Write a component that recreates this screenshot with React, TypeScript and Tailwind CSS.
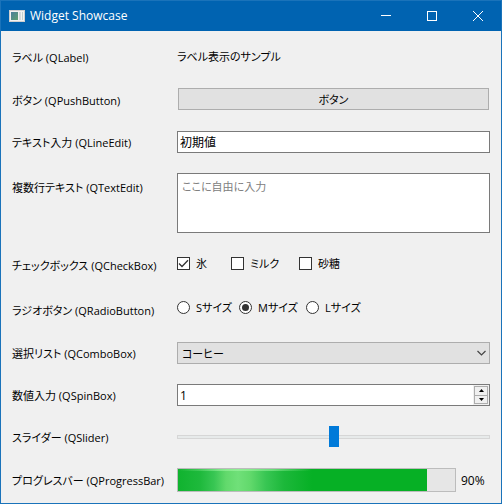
import { useState } from 'react';
import type { ReactNode } from 'react';

function AppIcon() {
  return (
    <svg width="16" height="14" viewBox="0 0 16 14" aria-hidden="true">
      <defs>
        <linearGradient id="pane" x1="0" y1="0" x2="1" y2="1">
          <stop offset="0" stopColor="#4a7f9c" />
          <stop offset="1" stopColor="#5fa070" />
        </linearGradient>
      </defs>
      <rect x="0.5" y="1.5" width="15" height="11" fill="#f2f2f2" stroke="#cfcfcf" />
      <rect x="2" y="3" width="7" height="8" fill="url(#pane)" />
      <rect x="10" y="3" width="2" height="8" fill="#d3dadc" />
      <rect x="13" y="3" width="1" height="8" fill="#c3cfcb" />
    </svg>
  );
}

function TitleBar() {
  return (
    <header className="flex h-[30px] items-center bg-[#0063b1] pl-2 text-white">
      <AppIcon />
      <h1 className="ml-[5px] flex-1 text-[12px] leading-4">Widget Showcase</h1>
      <button aria-label="Minimize" className="flex h-full w-[46px] items-center justify-center">
        <svg width="10" height="10" viewBox="0 0 10 10" stroke="white">
          <path d="M0 4.5H10" />
        </svg>
      </button>
      <button aria-label="Maximize" className="flex h-full w-[46px] items-center justify-center">
        <svg width="10" height="10" viewBox="0 0 10 10" stroke="white" fill="none">
          <rect x="0.5" y="0.5" width="9" height="9" />
        </svg>
      </button>
      <button aria-label="Close" className="flex h-full w-[46px] items-center justify-center">
        <svg width="10" height="10" viewBox="0 0 10 10" stroke="white">
          <path d="M0 0L10 10M10 0L0 10" />
        </svg>
      </button>
    </header>
  );
}

function RowLabel({ htmlFor, children, tall }: { htmlFor?: string; children: ReactNode; tall?: boolean }) {
  const place = tall ? 'self-start pt-[7px]' : 'self-center pt-0.5';
  return htmlFor ? (
    <label htmlFor={htmlFor} className={`whitespace-nowrap ${place}`}>
      {children}
    </label>
  ) : (
    <span className={`whitespace-nowrap ${place}`}>{children}</span>
  );
}

function Check({ label, defaultChecked }: { label: string; defaultChecked?: boolean }) {
  return (
    <label className="flex h-5 items-center gap-1.5 whitespace-nowrap">
      <span className="grid size-[13px] shrink-0">
        <input
          type="checkbox"
          defaultChecked={defaultChecked}
          className="peer col-start-1 row-start-1 size-[13px] appearance-none border border-[#333] bg-white"
        />
        <svg
          viewBox="0 0 13 13"
          className="pointer-events-none invisible col-start-1 row-start-1 size-[13px] peer-checked:visible"
          fill="none"
          stroke="#333"
          strokeWidth="1.3"
        >
          <path d="M2 6.5L5 9.5L11 3.2" />
        </svg>
      </span>
      <span className="pt-0.5">{label}</span>
    </label>
  );
}

function Radio({ label, defaultChecked }: { label: string; defaultChecked?: boolean }) {
  return (
    <label className="flex h-5 items-center gap-1.5 whitespace-nowrap">
      <span className="grid size-[13px] shrink-0 place-items-center">
        <input
          type="radio"
          name="size"
          defaultChecked={defaultChecked}
          className="peer col-start-1 row-start-1 size-[13px] appearance-none rounded-full border border-[#333] bg-white"
        />
        <span className="pointer-events-none invisible col-start-1 row-start-1 size-[7px] rounded-full bg-[#333] peer-checked:visible" />
      </span>
      <span className="pt-0.5">{label}</span>
    </label>
  );
}

function SpinBox() {
  const [value, setValue] = useState(1);
  return (
    <div className="flex h-[22px] border border-[#7a7a7a] bg-white">
      <input
        id="spin"
        type="number"
        value={value}
        onChange={(e) => setValue(Number(e.target.value))}
        className="min-w-0 flex-1 appearance-none bg-white px-0.5 pt-0.5 text-[12px] outline-none [appearance:textfield] [&::-webkit-inner-spin-button]:appearance-none"
      />
      <div className="flex w-4 flex-col bg-[#f0f0f0] p-px">
        <button
          aria-label="Increase"
          onClick={() => setValue(value + 1)}
          className="flex flex-1 items-center justify-center border border-b-0 border-[#adadad] bg-[#f0f0f0]"
        >
          <svg width="5" height="3" viewBox="0 0 5 3" aria-hidden="true">
            <path d="M0 3L2.5 0L5 3Z" />
          </svg>
        </button>
        <button
          aria-label="Decrease"
          onClick={() => setValue(value - 1)}
          className="flex flex-1 items-center justify-center border border-[#adadad] bg-[#f0f0f0]"
        >
          <svg width="5" height="3" viewBox="0 0 5 3" aria-hidden="true">
            <path d="M0 0L2.5 3L5 0Z" />
          </svg>
        </button>
      </div>
    </div>
  );
}

export default function App() {
  return (
    <div className="border border-[#1a73ba] bg-[#f0f0f0] font-['Open_Sans','Noto_Sans_CJK_JP',sans-serif] text-[11px] leading-4 text-black [font-feature-settings:'palt']">
      <TitleBar />
      <main className="grid grid-cols-[165px_minmax(0,1fr)] gap-y-5 px-[11px] pt-3.5 pb-[11px]">
        <RowLabel>ラベル (QLabel)</RowLabel>
        <p className="flex h-[23px] items-center">ラベル表示のサンプル</p>

        <RowLabel>ボタン (QPushButton)</RowLabel>
        <div className="flex h-[23px] items-start px-px">
          <button className="h-[22px] w-full border border-[#adadad] bg-[#e1e1e1] pt-0.5">ボタン</button>
        </div>

        <RowLabel htmlFor="line">テキスト入力 (QLineEdit)</RowLabel>
        <input
          id="line"
          type="text"
          defaultValue="初期値"
          className="h-[22px] w-full border border-[#7a7a7a] bg-white px-0.5 text-[12px] outline-none"
        />

        <RowLabel htmlFor="multi" tall>
          複数行テキスト (QTextEdit)
        </RowLabel>
        <textarea
          id="multi"
          placeholder="ここに自由に入力"
          className="h-[60px] w-full resize-none border border-[#7a7a7a] bg-white px-1 py-[5px] outline-none placeholder:text-[#808080]"
        />

        <RowLabel>チェックボックス (QCheckBox)</RowLabel>
        <div className="grid h-6 grid-cols-[54px_68px_auto] items-start justify-start">
          <Check label="氷" defaultChecked />
          <Check label="ミルク" />
          <Check label="砂糖" />
        </div>

        <RowLabel>ラジオボタン (QRadioButton)</RowLabel>
        <div className="grid h-[25px] grid-cols-[62px_67px_auto] items-start justify-start">
          <Radio label="Sサイズ" />
          <Radio label="Mサイズ" defaultChecked />
          <Radio label="Lサイズ" />
        </div>

        <RowLabel htmlFor="combo">選択リスト (QComboBox)</RowLabel>
        <div className="grid h-[22px] items-center">
          <select
            id="combo"
            className="col-start-1 row-start-1 h-[22px] w-full appearance-none border border-[#adadad] bg-[#e1e1e1] px-1 pt-0.5 outline-none"
          >
            <option>コーヒー</option>
          </select>
          <svg
            width="9"
            height="6"
            viewBox="0 0 9 6"
            className="pointer-events-none col-start-1 row-start-1 mr-1 justify-self-end"
            fill="none"
            stroke="#444"
            strokeWidth="1.2"
            aria-hidden="true"
          >
            <path d="M0.5 1L4.5 5L8.5 1" />
          </svg>
        </div>

        <RowLabel htmlFor="spin">数値入力 (QSpinBox)</RowLabel>
        <SpinBox />

        <RowLabel htmlFor="slider">スライダー (QSlider)</RowLabel>
        <input
          id="slider"
          type="range"
          min={0}
          max={100}
          defaultValue={50}
          className="h-[22px] w-full appearance-none bg-transparent [&::-webkit-slider-runnable-track]:h-1 [&::-webkit-slider-runnable-track]:border [&::-webkit-slider-runnable-track]:border-[#d6d6d6] [&::-webkit-slider-runnable-track]:bg-[#e7eaea] [&::-webkit-slider-thumb]:-mt-[10px] [&::-webkit-slider-thumb]:h-[21px] [&::-webkit-slider-thumb]:w-[10px] [&::-webkit-slider-thumb]:appearance-none [&::-webkit-slider-thumb]:bg-[#007ad9]"
        />

        <RowLabel htmlFor="progress">プログレスバー (QProgressBar)</RowLabel>
        <div className="flex h-6 items-center">
          <progress
            id="progress"
            value={90}
            max={100}
            className="h-6 min-w-0 flex-1 appearance-none border border-[#bcbcbc] bg-[#e6e6e6] [&::-webkit-progress-bar]:bg-[#e6e6e6] [&::-webkit-progress-value]:bg-[linear-gradient(to_right,rgba(180,255,180,0),rgba(180,255,180,0.45)_30%,rgba(180,255,180,0.45)_70%,rgba(180,255,180,0)),linear-gradient(to_right,#10b32f_0px,#1eb93c_22px,#38c653_36px,#62d96c_48px,#70e079_60px,#62d96c_72px,#38c653_88px,#1cb83a_106px,#06b025_134px)] [&::-webkit-progress-value]:bg-[length:134px_2px,100%_100%] [&::-webkit-progress-value]:bg-no-repeat"
          />
          <span className="w-[34px] pt-0.5 pl-[5px] text-[12px]">90%</span>
        </div>
      </main>
    </div>
  );
}
